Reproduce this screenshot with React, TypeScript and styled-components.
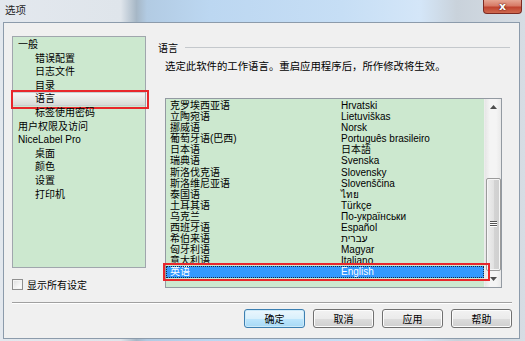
import React from "react";
import styled, { createGlobalStyle } from "styled-components";

const GlobalStyle = createGlobalStyle`
  html, body {
    margin: 0;
    padding: 0;
    width: 525px;
    height: 341px;
    overflow: hidden;
    background: #dfe6ed;
  }
  * {
    box-sizing: border-box;
  }
`;

const FONT = `"Liberation Sans", "Noto Sans CJK SC", "DejaVu Sans", sans-serif`;
const RED_MARK = "#e8262b";

const Window = styled.div`
  width: 525px;
  height: 341px;
  display: flex;
  flex-direction: column;
  font-family: ${FONT};
  font-size: 10px;
  color: #000;
  background: linear-gradient(
    90deg,
    #e3e8ee 0%,
    #dfe5eb 23%,
    #a6b7c6 26%,
    #b2cbe3 28%,
    #bcd7f1 40%,
    #c6def5 65%,
    #d4e6f8 80%,
    #c9d2db 87%,
    #d6dde4 100%
  );
`;

const TitleBar = styled.div`
  height: 22px;
  display: flex;
  align-items: flex-start;
  justify-content: space-between;
  padding-left: 5px;
`;

const TitleText = styled.span`
  margin-top: 4px;
  font-size: 10.5px;
  line-height: 13px;
  color: #1e1e1e;
`;

const CloseButton = styled.div`
  width: 39px;
  height: 14px;
  margin-right: 3px;
  border: 1px solid #7d2a22;
  border-top: none;
  border-radius: 0 0 4px 4px;
  background: linear-gradient(180deg, #e6a593 0%, #d77a66 45%, #c0432f 55%, #cf6a4f 100%);
  display: flex;
  align-items: center;
  justify-content: center;
  color: #fff;
  font-family: "DejaVu Sans", sans-serif;
  font-weight: bold;
  font-size: 11px;
  line-height: 11px;
  text-shadow: 0 0 2px #5b1a12, 0 0 1px #5b1a12;
`;

const Client = styled.div`
  height: 317px;
  margin: 0 5px 0 3px;
  border: 1px solid #8c9bab;
  background: #f0f0f0;
  padding: 13px 7px 0 8px;
  display: flex;
  flex-direction: column;
`;

const Upper = styled.div`
  display: flex;
  align-items: flex-start;
`;

const LeftCol = styled.div`
  width: 134px;
  display: flex;
  flex-direction: column;
`;

const Tree = styled.div`
  height: 232px;
  border: 1px solid #a0a6ad;
  background: #cce8cf;
  padding-top: 1px;
  display: flex;
  flex-direction: column;
`;

const TreeItem = styled.div<{ $depth: number; $selected?: boolean }>`
  position: relative;
  height: 13.6px;
  line-height: 13.6px;
  padding-left: ${(p) => (p.$depth ? 22 : 5)}px;
  white-space: nowrap;
  border: 1px solid ${(p) => (p.$selected ? "#c9cdd0" : "transparent")};
  border-left: none;
  border-right: none;
  background: ${(p) =>
    p.$selected ? "linear-gradient(180deg, #f4f5f4 0%, #e3e6e3 60%, #d6dad6 100%)" : "transparent"};
  display: flex;
  align-items: center;

  ${(p) =>
    p.$selected &&
    `
    &::after {
      content: "";
      position: absolute;
      top: -3px;
      bottom: -4px;
      left: -2px;
      right: -4px;
      border: 2px solid ${RED_MARK};
    }
  `}
`;

const CheckRow = styled.label`
  margin-top: 10px;
  height: 12px;
  display: flex;
  align-items: center;
  gap: 4px;
  font-size: 10px;
`;

const CheckBox = styled.span`
  width: 11px;
  height: 11px;
  border: 1px solid #8f8f8f;
  background: linear-gradient(135deg, #dcdcdc 0%, #f4f4f4 60%, #ffffff 100%);
  box-shadow: inset 0 0 0 1px #f4f4f4;
`;

const RightCol = styled.div`
  flex: 1;
  margin-left: 4px;
  display: flex;
  flex-direction: column;
`;

const GroupHeader = styled.div`
  margin-top: 5px;
  height: 12px;
  padding-left: 8px;
  display: flex;
  align-items: center;
  gap: 7px;
`;

const GroupLine = styled.div`
  flex: 1;
  height: 1px;
  margin-right: 2px;
  background: #c4c8cc;
`;

const Description = styled.div`
  margin-top: 8px;
  padding-left: 15px;
  line-height: 12px;
  font-size: 10.4px;
  white-space: nowrap;
`;

const ListBox = styled.div`
  margin: 25px 10px 0 15px;
  height: 190px;
  border: 1px solid #939aa2;
  background: #cce8cf;
  display: flex;
`;

const ListBody = styled.div`
  flex: 1;
  padding-top: 1px;
  display: flex;
  flex-direction: column;
`;

const ListRow = styled.div<{ $selected?: boolean }>`
  position: relative;
  height: 11.1px;
  display: grid;
  grid-template-columns: 171px 1fr;
  padding-left: 4px;
  line-height: 11.1px;
  white-space: nowrap;
  background: ${(p) => (p.$selected ? "#3399ff" : "transparent")};
  color: ${(p) => (p.$selected ? "#ffffff" : "#000")};
  ${(p) =>
    p.$selected &&
    `
    outline: 1px dotted #1a2a40;
    outline-offset: -1px;
    &::after {
      content: "";
      position: absolute;
      top: -3px;
      bottom: -3px;
      left: -3px;
      right: -6px;
      border: 2px solid ${RED_MARK};
    }
  `}
`;

const ScrollBar = styled.div`
  width: 17px;
  display: flex;
  flex-direction: column;
  background: linear-gradient(90deg, #e6e6e6 0%, #f4f4f4 30%, #f4f4f4 70%, #e9e9e9 100%);
  border-left: 1px solid #ececec;
`;

const ScrollArrow = styled.div`
  height: 17px;
  display: flex;
  align-items: center;
  justify-content: center;
`;

const ScrollTrack = styled.div`
  flex: 1;
  display: flex;
  flex-direction: column;
`;

const ScrollThumb = styled.div`
  height: 93px;
  margin: 0 0 0 1px;
  width: 15px;
  border: 1px solid #9b9b9b;
  border-radius: 2px;
  background: linear-gradient(90deg, #eeeeee 0%, #e2e2e2 50%, #d4d4d4 51%, #cfcfcf 100%);
  box-shadow: inset 0 0 0 1px #f6f6f6;
  display: flex;
  align-items: center;
  justify-content: center;
`;

const Separator = styled.div`
  margin-top: 12px;
  height: 2px;
  border-top: 1px solid #a0a0a0;
  border-bottom: 1px solid #ffffff;
`;

const ButtonRow = styled.div`
  margin-top: 5px;
  display: flex;
  justify-content: flex-end;
  gap: 8px;
`;

const DialogButton = styled.div<{ $default?: boolean }>`
  width: 61px;
  height: 19px;
  border: 1px solid ${(p) => (p.$default ? "#3c7fb1" : "#707070")};
  border-radius: 3px;
  background: ${(p) =>
    p.$default
      ? "linear-gradient(180deg, #eaf6fd 0%, #d9f0fc 50%, #bee6fd 51%, #a7d9f5 100%)"
      : "linear-gradient(180deg, #f2f2f2 0%, #ebebeb 50%, #dddddd 51%, #cfcfcf 100%)"};
  box-shadow: inset 0 0 0 1px ${(p) => (p.$default ? "#cdeaf9" : "#fcfcfc")};
  display: flex;
  align-items: center;
  justify-content: center;
  font-size: 10px;
`;

const treeItems: { label: string; depth: number; selected?: boolean }[] = [
  { label: "一般", depth: 0 },
  { label: "错误配置", depth: 1 },
  { label: "日志文件", depth: 1 },
  { label: "目录", depth: 1 },
  { label: "语言", depth: 1, selected: true },
  { label: "标签使用密码", depth: 1 },
  { label: "用户权限及访问", depth: 0 },
  { label: "NiceLabel Pro", depth: 0 },
  { label: "桌面", depth: 1 },
  { label: "颜色", depth: 1 },
  { label: "设置", depth: 1 },
  { label: "打印机", depth: 1 },
];

const languages: [string, string][] = [
  ["克罗埃西亚语", "Hrvatski"],
  ["立陶宛语", "Lietuviškas"],
  ["挪威语", "Norsk"],
  ["葡萄牙语(巴西)", "Português brasileiro"],
  ["日本语", "日本語"],
  ["瑞典语", "Svenska"],
  ["斯洛伐克语", "Slovensky"],
  ["斯洛维尼亚语", "Slovenščina"],
  ["泰国语", "ไทย"],
  ["土耳其语", "Türkçe"],
  ["乌克兰", "По-українськи"],
  ["西班牙语", "Español"],
  ["希伯来语", "עברית"],
  ["匈牙利语", "Magyar"],
  ["意大利语", "Italiano"],
  ["英语", "English"],
];

const Arrow = ({ up }: { up?: boolean }) => (
  <svg width="7" height="4" viewBox="0 0 7 4">
    <path d={up ? "M0 4 L3.5 0 L7 4 Z" : "M0 0 L3.5 4 L7 0 Z"} fill="#4d4d4d" />
  </svg>
);

const Grip = () => (
  <svg width="7" height="6" viewBox="0 0 7 6">
    <path d="M0 0.5 H7 M0 2.5 H7 M0 4.5 H7" stroke="#555" strokeWidth="1" />
    <path d="M0 1.5 H7 M0 3.5 H7 M0 5.5 H7" stroke="#fff" strokeWidth="1" />
  </svg>
);

export default function App() {
  return (
    <>
      <GlobalStyle />
      <Window>
        <TitleBar>
          <TitleText>选项</TitleText>
          <CloseButton>x</CloseButton>
        </TitleBar>
        <Client>
          <Upper>
            <LeftCol>
              <Tree>
                {treeItems.map((item) => (
                  <TreeItem key={item.label} $depth={item.depth} $selected={item.selected}>
                    {item.label}
                  </TreeItem>
                ))}
              </Tree>
              <CheckRow>
                <CheckBox />
                显示所有设定
              </CheckRow>
            </LeftCol>
            <RightCol>
              <GroupHeader>
                <span>语言</span>
                <GroupLine />
              </GroupHeader>
              <Description>选定此软件的工作语言。重启应用程序后，所作修改将生效。</Description>
              <ListBox>
                <ListBody>
                  {languages.map(([zh, native]) => (
                    <ListRow key={zh} $selected={native === "English"}>
                      <span>{zh}</span>
                      <span>{native}</span>
                    </ListRow>
                  ))}
                </ListBody>
                <ScrollBar>
                  <ScrollArrow>
                    <Arrow up />
                  </ScrollArrow>
                  <ScrollTrack>
                    <div style={{ height: 62 }} />
                    <ScrollThumb>
                      <Grip />
                    </ScrollThumb>
                  </ScrollTrack>
                  <ScrollArrow>
                    <Arrow />
                  </ScrollArrow>
                </ScrollBar>
              </ListBox>
            </RightCol>
          </Upper>
          <Separator />
          <ButtonRow>
            <DialogButton $default>确定</DialogButton>
            <DialogButton>取消</DialogButton>
            <DialogButton>应用</DialogButton>
            <DialogButton>帮助</DialogButton>
          </ButtonRow>
        </Client>
      </Window>
    </>
  );
}
